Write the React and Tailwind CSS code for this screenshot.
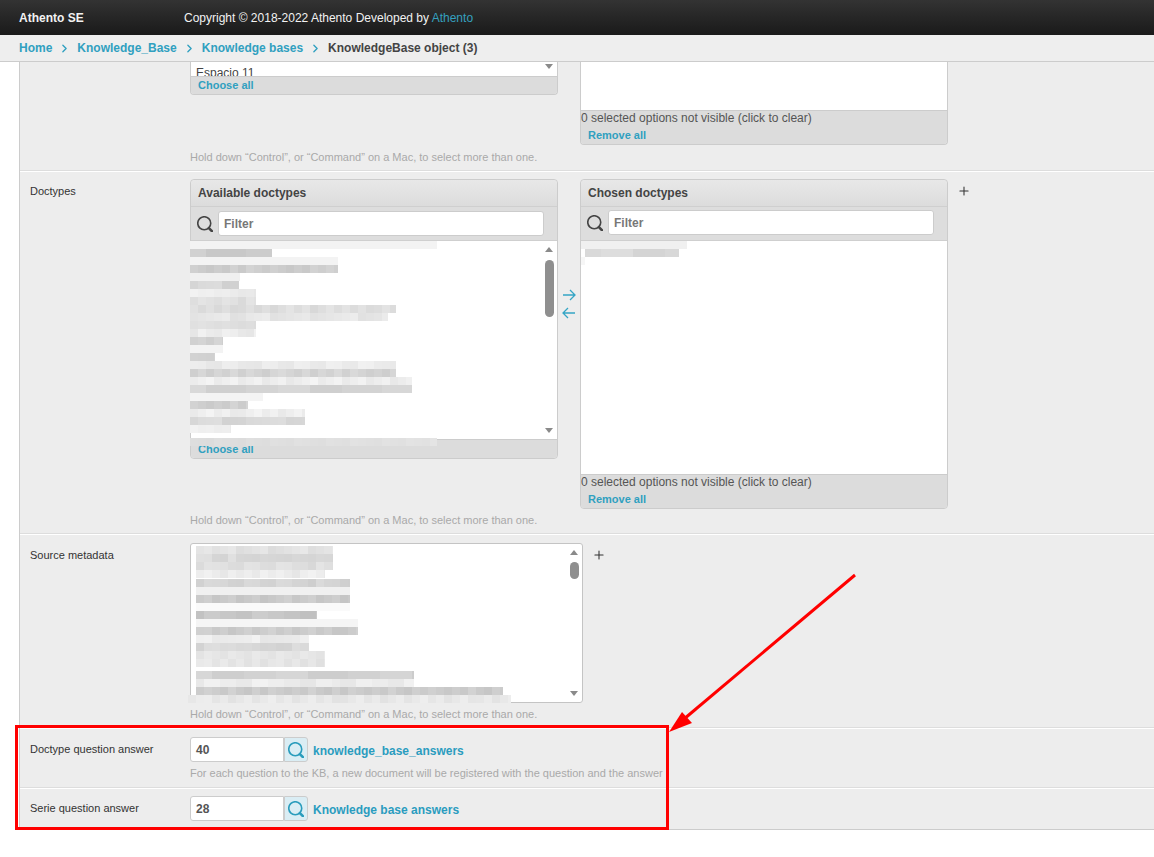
import { ChevronRight, Plus } from 'lucide-react';

const helpText = 'Hold down “Control”, or “Command” on a Mac, to select more than one.';

// pixelated (censored) option names: [y, x start, x end, grey level]
const availableBlur = [
  [0, 190, 437, 243], [8, 190, 272, 204], [16, 190, 338, 243], [24, 190, 338, 206],
  [32, 190, 240, 240], [40, 190, 239, 214], [48, 190, 256, 236], [56, 190, 256, 222],
  [64, 190, 396, 222], [72, 190, 388, 230], [80, 190, 256, 224], [88, 190, 256, 236],
  [96, 190, 223, 208], [104, 190, 223, 243], [112, 190, 215, 212], [120, 190, 396, 236],
  [128, 190, 396, 212], [136, 190, 412, 238], [144, 190, 412, 212], [152, 190, 263, 244],
  [160, 190, 248, 208], [168, 190, 305, 238], [176, 190, 305, 216], [184, 190, 231, 236],
  [197, 190, 437, 224],
];
const chosenBlur = [
  [0, 577, 687, 240], [8, 585, 679, 218], [16, 577, 585, 246],
];
const sourceBlur = [
  [2, 196, 333, 226], [10, 196, 333, 218], [18, 196, 333, 222], [26, 196, 325, 236],
  [35, 196, 350, 212], [43, 196, 350, 240], [51, 196, 350, 202], [59, 196, 350, 250],
  [67, 196, 317, 198], [75, 196, 358, 245], [83, 196, 358, 204], [91, 196, 309, 236],
  [99, 196, 309, 216], [107, 196, 325, 228], [115, 196, 325, 230], [127, 196, 414, 210],
  [135, 196, 414, 236], [143, 196, 503, 204], [151, 188, 511, 232],
];

function noise(x, y) {
  return ((x * 7 + y * 13 + ((x * y) % 17)) % 13) - 6;
}

function Blur({ rows, originX }) {
  return (
    <svg className="absolute left-0 top-0 overflow-visible" width="1" height="1">
      {rows.map(([y, from, to, level]) => {
        const cells = [];
        for (let x = from; x < to; x += 8) {
          const v = level >= 240 ? level : Math.min(250, level + noise(x, y));
          cells.push(
            <rect
              key={x}
              x={x - originX}
              y={y}
              width={Math.min(8, to - x)}
              height="8"
              fill={`rgb(${v},${v},${v})`}
            />
          );
        }
        return <g key={y}>{cells}</g>;
      })}
    </svg>
  );
}

function Magnifier({ color, className }) {
  return (
    <svg className={className} viewBox="0.8 0.8 14.8 14.8" fill="none">
      <circle cx="7.5" cy="7.5" r="6" stroke={color} strokeWidth="1.5" />
      <path d="M11.8 12 L14.6 14.8" stroke={color} strokeWidth="2.4" strokeLinecap="round" />
    </svg>
  );
}

function Scroller({ thumbTop, thumbHeight }) {
  return (
    <>
      <span className="absolute right-[4px] top-[6px] h-0 w-0 border-x-[4.5px] border-b-[5px] border-x-transparent border-b-[#8a8a8a]" />
      <span
        className="absolute right-[3px] w-[9px] rounded-full bg-[#8f8f8f]"
        style={{ top: thumbTop, height: thumbHeight }}
      />
      <span className="absolute bottom-[6px] right-[4px] h-0 w-0 border-x-[4.5px] border-t-[5px] border-x-transparent border-t-[#8a8a8a]" />
    </>
  );
}

function FilterBar({ extra }) {
  return (
    <div className={`flex h-[35px] items-center border-y border-[#cfcfcf] bg-[#dddddd] pl-[6px] ${extra}`}>
      <Magnifier color="#444444" className="h-[16px] w-[16px]" />
      <div className="ml-[5px] flex h-[25px] w-[326px] items-center rounded-[3px] border border-[#cccccc] bg-white pl-[5px] text-[12px] font-bold text-[#777777]">
        Filter
      </div>
    </div>
  );
}

function SelectorHead({ title }) {
  return (
    <div className="flex h-[26px] items-center rounded-t-[4px] bg-gradient-to-b from-[#e8e8e8] to-[#dcdcdc] pl-[7px] text-[12px] font-bold text-[#444444]">
      {title}
    </div>
  );
}

function ChooseLink({ children }) {
  return (
    <div className="pl-[7px] text-[11px] font-bold leading-[14px] text-[#30a0c0]">{children}</div>
  );
}

function NotVisible() {
  return (
    <div className="h-[34px] border-t border-[#cccccc] bg-[#dcdcdc]">
      <div className="text-[12px] leading-[15px] text-[#555555]">
        0 selected options not visible (click to clear)
      </div>
      <div className="pt-[2px]">
        <ChooseLink>Remove all</ChooseLink>
      </div>
    </div>
  );
}

function HelpText({ children, className }) {
  return <p className={`text-[11px] leading-[14px] text-[#a9a9a9] ${className}`}>{children}</p>;
}

function Lookup({ value, label }) {
  return (
    <div className="flex items-center">
      <div className="flex h-[25px] w-[94px] items-center rounded-l-[3px] border border-[#cccccc] bg-white pl-[5px] text-[12px] font-bold text-[#555555]">
        {value}
      </div>
      <div className="flex h-[25px] w-[24px] items-center justify-center rounded-r-[3px] border border-l border-[#cccccc] bg-[#daedf4]">
        <Magnifier color="#2a9cbc" className="h-[16px] w-[16px]" />
      </div>
      <a className="ml-[5px] pt-[2px] text-[12px] font-bold text-[#2a9cbf]">{label}</a>
    </div>
  );
}

function Label({ children }) {
  return <div className="w-[170px] shrink-0 pl-[10px] text-[11px] leading-[14px] text-[#333333]">{children}</div>;
}

export default function App() {
  return (
    <div className="relative h-[857px] overflow-hidden bg-white font-['Liberation_Sans',Arial,sans-serif]">
      {/* Top bar */}
      <header className="flex h-[35px] items-center bg-gradient-to-b from-[#333333] to-[#1a1a1a] text-[12px] text-[#f2f2f2]">
        <div className="w-[184px] pl-[19px] font-bold">Athento SE</div>
        <div>
          Copyright © 2018-2022 Athento Developed by <span className="text-[#35a0bf]">Athento</span>
        </div>
      </header>

      {/* Breadcrumbs */}
      <nav className="flex h-[27px] items-center border-b border-[#cccccc] bg-[#eeeeee] pl-[19px] text-[12px] font-bold text-[#30a0c0]">
        <a>Home</a>
        <ChevronRight className="mx-[6px] h-[13px] w-[13px]" strokeWidth={2.5} />
        <a>Knowledge_Base</a>
        <ChevronRight className="mx-[6px] h-[13px] w-[13px]" strokeWidth={2.5} />
        <a>Knowledge bases</a>
        <ChevronRight className="mx-[6px] h-[13px] w-[13px]" strokeWidth={2.5} />
        <span className="text-[#444444]">KnowledgeBase object (3)</span>
      </nav>

      {/* Form */}
      <main className="ml-[19px] border-l border-[#cccccc] bg-[#ededed]">
        {/* Scrolled-off first row */}
        <section className="relative h-[109px] border-b border-[#dddddd] shadow-[0_1px_0_#ffffff]">
          <div className="flex items-start pl-[170px]">
            <div className="w-[368px] overflow-hidden rounded-b-[4px] border-x border-b border-[#cccccc]">
              <div className="relative h-[14px] overflow-hidden bg-white">
                <div className="pl-[5px] pt-[4px] text-[12px] leading-[14px] text-[#444444]">Espacio 11</div>
                <span className="absolute right-[4px] top-[2px] h-0 w-0 border-x-[4.5px] border-t-[5px] border-x-transparent border-t-[#8a8a8a]" />
              </div>
              <div className="h-[18px] border-t border-[#cccccc] bg-[#dcdcdc] pt-[1px]">
                <ChooseLink>Choose all</ChooseLink>
              </div>
            </div>
            <div className="ml-[22px] w-[368px] overflow-hidden rounded-b-[4px] border-x border-b border-[#cccccc]">
              <div className="h-[48px] bg-white" />
              <NotVisible />
            </div>
          </div>
          <HelpText className="pl-[170px] pt-[5px]">{helpText}</HelpText>
        </section>

        {/* Doctypes */}
        <section className="h-[363px] border-b border-[#dddddd] pt-[8px] shadow-[0_1px_0_#ffffff]">
          <div className="flex items-start">
            <Label>
              <span className="block pt-[5px]">Doctypes</span>
            </Label>
            <div className="w-[368px] rounded-[4px] border border-[#cccccc]">
              <SelectorHead title="Available doctypes" />
              <FilterBar extra="" />
              <div className="relative h-[198px] bg-white">
                <Blur rows={availableBlur} originX={191} />
                <Scroller thumbTop="19px" thumbHeight="57px" />
              </div>
              <div className="h-[19px] rounded-b-[4px] border-t border-[#cccccc] bg-[#dcdcdc] pt-[2px]">
                <ChooseLink>Choose all</ChooseLink>
              </div>
            </div>
            <div className="flex w-[22px] flex-col items-center gap-[2px] pt-[108px]">
              <svg width="16" height="16" viewBox="0 0 16 16" fill="none" stroke="#35a5c5" strokeWidth="1.3">
                <path d="M2 8 H14 M9 3 L14 8 L9 13" />
              </svg>
              <svg width="16" height="16" viewBox="0 0 16 16" fill="none" stroke="#35a5c5" strokeWidth="1.3">
                <path d="M14 8 H2 M7 3 L2 8 L7 13" />
              </svg>
            </div>
            <div className="w-[368px] overflow-hidden rounded-[4px] border border-[#cccccc]">
              <SelectorHead title="Chosen doctypes" />
              <FilterBar extra="pb-[2px]" />
              <div className="relative h-[233px] bg-white">
                <Blur rows={chosenBlur} originX={581} />
              </div>
              <NotVisible />
            </div>
            <Plus className="ml-[9px] mt-[5px] h-[14px] w-[14px] text-[#333333]" strokeWidth={1.8} />
          </div>
          <HelpText className="pl-[170px] pt-[4px]">{helpText}</HelpText>
        </section>

        {/* Source metadata */}
        <section className="h-[194px] border-b border-[#dddddd] pt-[9px] shadow-[0_1px_0_#ffffff]">
          <div className="flex items-start">
            <Label>
              <span className="block pt-[5px]">Source metadata</span>
            </Label>
            <div className="relative h-[160px] w-[393px] rounded-[3px] border border-[#c4c4c4] bg-white">
              <Blur rows={sourceBlur} originX={191} />
              <Scroller thumbTop="18px" thumbHeight="17px" />
            </div>
            <Plus className="ml-[9px] mt-[5px] h-[14px] w-[14px] text-[#333333]" strokeWidth={1.8} />
          </div>
          <HelpText className="pl-[170px] pt-[4px]">{helpText}</HelpText>
        </section>

        {/* Lookups */}
        <section className="h-[60px] border-b border-[#dddddd] pt-[9px] shadow-[0_1px_0_#ffffff]">
          <div className="flex items-start">
            <Label>
              <span className="block pt-[5px]">Doctype question answer</span>
            </Label>
            <Lookup value="40" label="knowledge_base_answers" />
          </div>
          <HelpText className="pl-[170px] pt-[4px]">
            For each question to the KB, a new document will be registered with the question and the answer
          </HelpText>
        </section>
        <section className="h-[42px] border-b border-[#cccccc] pt-[8px]">
          <div className="flex items-start">
            <Label>
              <span className="block pt-[5px]">Serie question answer</span>
            </Label>
            <Lookup value="28" label="Knowledge base answers" />
          </div>
        </section>
      </main>

      {/* Red annotation */}
      <div className="absolute left-[15px] top-[725px] h-[105px] w-[654px] border-[3px] border-[#ff0000]" />
      <svg className="absolute left-0 top-0" width="1154" height="857" fill="none">
        <path d="M855 575 L684 719" stroke="#ff0000" strokeWidth="3" />
        <path d="M669 732 L682 712 L692 723 Z" fill="#ff0000" />
      </svg>
    </div>
  );
}
